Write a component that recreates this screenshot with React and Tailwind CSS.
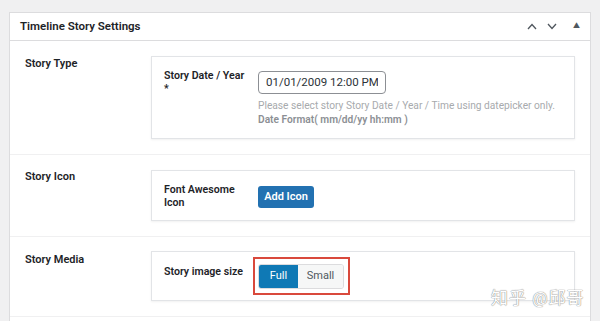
import { useState } from "react";

function Chevron({ up }) {
  return (
    <svg width="10" height="7" viewBox="0 0 10 7" fill="none" stroke="#50575e" strokeWidth="1.3">
      {up ? <path d="M1 6l4-4.5L9 6" /> : <path d="M1 1l4 4.5L9 1" />}
    </svg>
  );
}

function SettingRow({ label, children, boxTop = "pt-[12px]", labelTop = "pt-0" }) {
  return (
    <div className="flex border-b border-[#f0f0f1] px-[15px] py-[15px]">
      <div className={`w-[126px] shrink-0 ${labelTop} text-[11px] leading-[13px] font-semibold text-[#1d2327]`}>
        {label}
      </div>
      <div className={`flex-1 border border-[#e2e4e7] bg-white px-[12px] ${boxTop} pb-[11px] shadow-[0_1px_2px_rgba(0,0,0,0.06)]`}>
        {children}
      </div>
    </div>
  );
}

function FieldLabel({ children }) {
  return (
    <div className="w-[94px] shrink-0 pr-[12px] text-[10.6px] leading-[13px] font-semibold text-[#1d2327]">
      {children}
    </div>
  );
}

export default function App() {
  const [size, setSize] = useState("full");

  return (
    <div
      className="min-h-[321px] bg-[#f0f0f1] pt-[12px] px-[9px] overflow-hidden"
      style={{ fontFamily: "Roboto, 'Noto Sans CJK SC', sans-serif" }}
    >
      <div className="relative border border-[#dcdcde] bg-white">
        {/* Header */}
        <div className="flex h-[28px] items-center justify-between border-b border-[#dcdcde] pl-[10px] pr-[10px]">
          <h2 className="text-[11.5px] font-semibold text-[#1d2327]">Timeline Story Settings</h2>
          <div className="flex items-center gap-[10px]">
            <Chevron up />
            <Chevron />
            <span className="ml-[6px] text-[7px] text-[#50575e]">▲</span>
          </div>
        </div>

        {/* Story Type */}
        <SettingRow label="Story Type" labelTop="pt-[1px]">
          <div className="flex">
            <FieldLabel>Story Date / Year *</FieldLabel>
            <div>
              <input
                defaultValue="01/01/2009 12:00 PM"
                className="h-[23px] w-[128px] rounded-[4px] border border-[#8c8f94] bg-white px-[7px] text-[11.5px] text-[#2c3338] outline-none"
              />
              <p className="mt-[5px] whitespace-nowrap text-[10.2px] leading-[14px] text-[#a7aaad]">
                Please select story Story Date / Year / Time using datepicker only.
              </p>
              <p className="whitespace-nowrap text-[10.2px] leading-[14px] font-semibold text-[#8c8f94]">
                Date Format( mm/dd/yy hh:mm )
              </p>
            </div>
          </div>
        </SettingRow>

        {/* Story Icon */}
        <SettingRow label="Story Icon">
          <div className="flex">
            <FieldLabel>Font Awesome Icon</FieldLabel>
            <div>
              <button className="h-[22px] w-[56px] rounded-[3px] bg-[#2271b1] text-[11px] font-semibold text-white">
                Add Icon
              </button>
            </div>
          </div>
        </SettingRow>

        {/* Story Media */}
        <div className="-mt-px">
          <SettingRow label="Story Media" labelTop="pt-[2px]">
            <div className="flex">
              <div className="pt-[1px]">
                <FieldLabel>Story image size</FieldLabel>
              </div>
              <div className="relative">
                <div className="flex h-[25px] overflow-hidden rounded-[3px] border border-[#dcdcde] text-[11px]">
                  <button
                    onClick={() => setSize("full")}
                    className={`w-[39px] ${size === "full" ? "bg-[#0f79b5] text-white" : "bg-[#f6f7f7] text-[#50575e]"}`}
                  >
                    Full
                  </button>
                  <button
                    onClick={() => setSize("small")}
                    className={`w-[45px] ${size === "small" ? "bg-[#0f79b5] text-white" : "bg-[#f6f7f7] text-[#50575e]"}`}
                  >
                    Small
                  </button>
                </div>
                {/* annotation */}
                <div className="pointer-events-none absolute -left-[5px] -top-[7px] -right-[6px] -bottom-[6px] border-2 border-[#d9493c]" />
              </div>
            </div>
          </SettingRow>
        </div>

        <div className="h-[8px]" />

        {/* watermark */}
        <div
          className="pointer-events-none absolute left-[481px] top-[273px] text-[17px] tracking-[1px] text-white"
          style={{ textShadow: "0 0 1px #888, 0 0 1px #888" }}
        >
          知乎 @邱哥
        </div>
      </div>
    </div>
  );
}
